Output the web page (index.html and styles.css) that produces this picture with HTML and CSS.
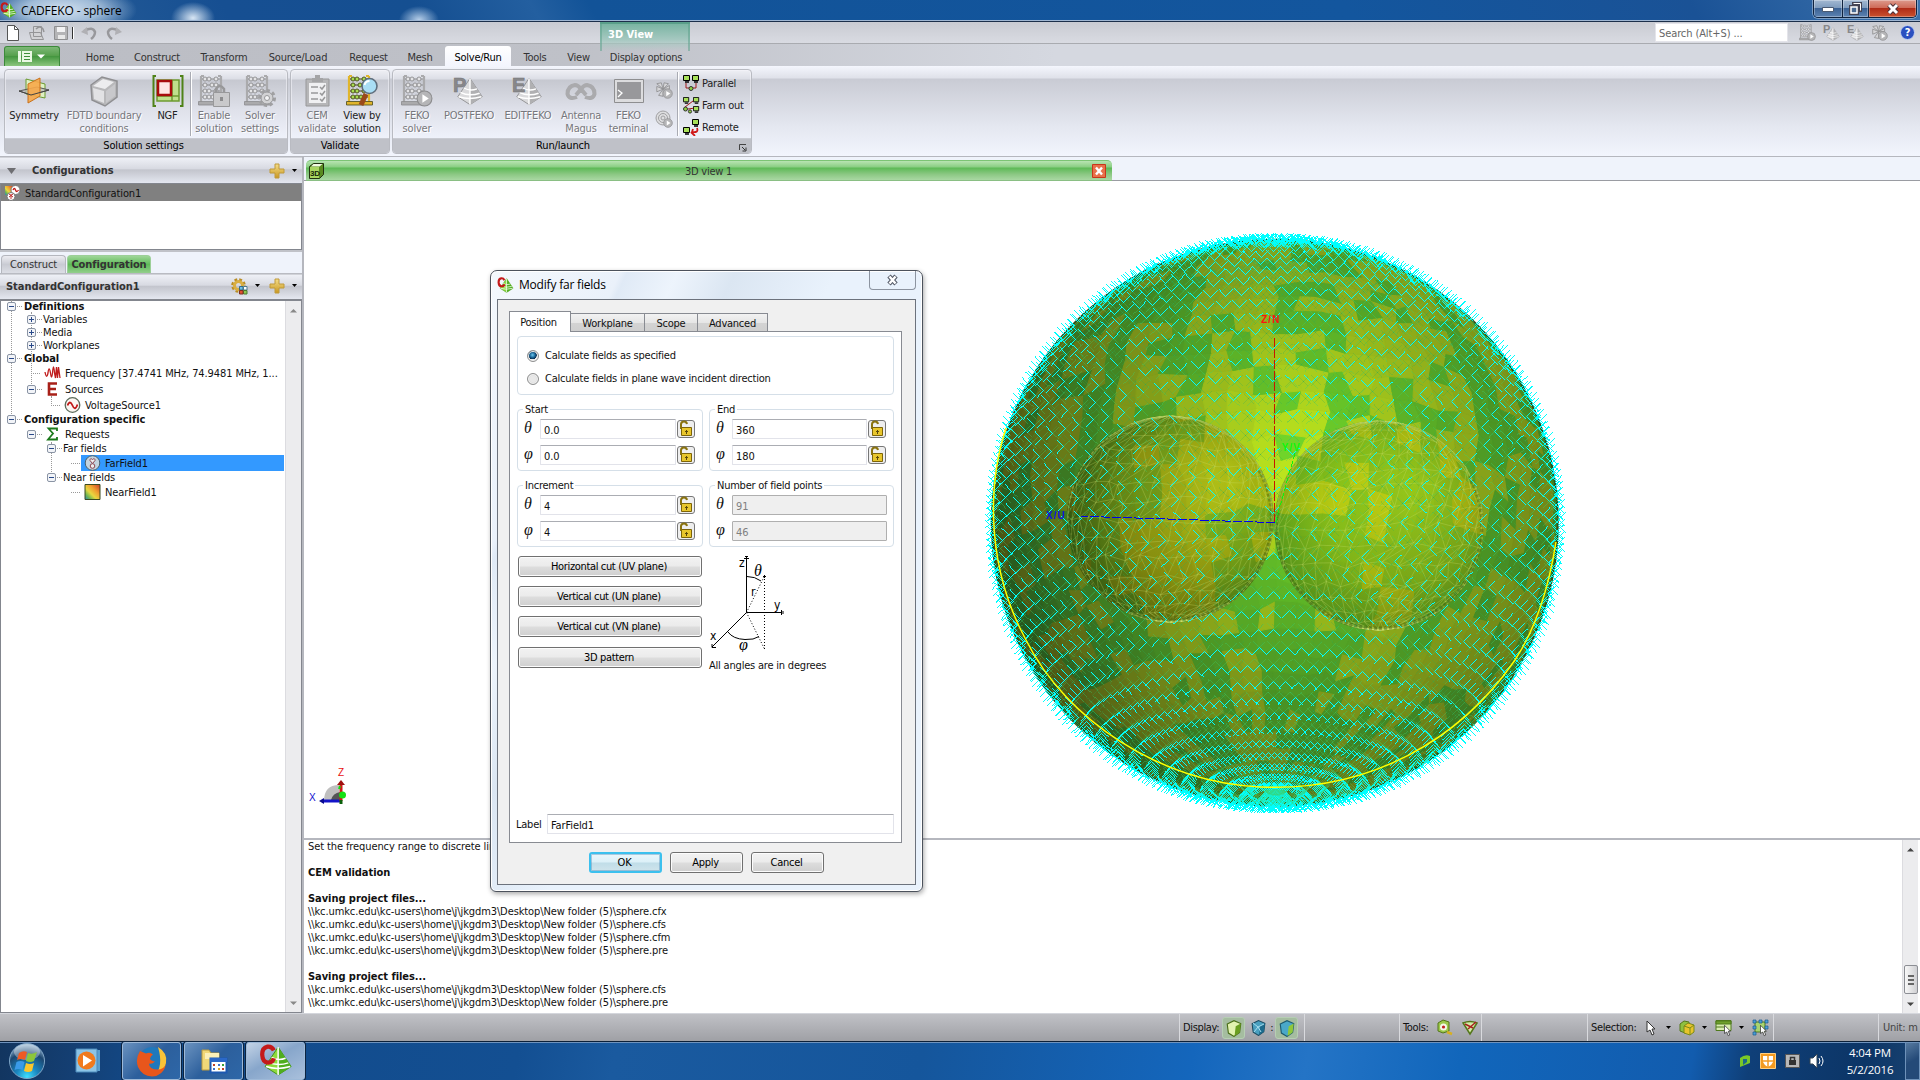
FILE: index.html
```
<!DOCTYPE html>
<html lang="en">
<head>
<meta charset="utf-8">
<title>CADFEKO - sphere</title>
<link rel="stylesheet" href="styles.css">
</head>
<body>
<svg class="defs" width="0" height="0">
  <defs>
    <linearGradient id="gold" x1="0" y1="0" x2="0" y2="1"><stop offset="0" stop-color="#f4de8a"/><stop offset="1" stop-color="#c9971f"/></linearGradient>
    <linearGradient id="heat" x1="1" y1="0" x2="0" y2="1"><stop offset="0" stop-color="#c93a2a"/><stop offset=".35" stop-color="#f0a030"/><stop offset=".6" stop-color="#e8d840"/><stop offset=".8" stop-color="#70b850"/><stop offset="1" stop-color="#2a80c0"/></linearGradient>
    <symbol id="abacus" viewBox="0 0 32 32">
      <path d="M3 1v27M23 1v27M3 1h3M20 1h3" fill="none" stroke="var(--f)" stroke-width="2.2"/>
      <path d="M4 4h18M4 10h18M4 16h18M4 22h18" stroke="var(--s)" stroke-width="1"/>
      <g fill="var(--b)" stroke="var(--s)" stroke-width=".9"><circle cx="7" cy="4" r="2"/><circle cx="11" cy="4" r="2"/><circle cx="18" cy="4" r="2"/><circle cx="7" cy="10" r="2"/><circle cx="14" cy="10" r="2"/><circle cx="18" cy="10" r="2"/><circle cx="7" cy="16" r="2"/><circle cx="11" cy="16" r="2"/><circle cx="18" cy="16" r="2"/><circle cx="7" cy="22" r="2"/><circle cx="11" cy="22" r="2"/><circle cx="15" cy="22" r="2"/></g>
      <path d="M.5 26.500h26v3.500h-26z" fill="var(--f)" stroke="var(--s)" stroke-width=".8"/>
    </symbol>
    <symbol id="play" viewBox="0 0 16 16"><circle cx="8" cy="8" r="7" fill="#b5b5b7" stroke="#8c8c8e"/><path d="M6 4l6 4-6 4z" fill="#fff"/></symbol>
    <symbol id="gem" viewBox="0 0 32 32">
      <path d="M16 1L30 22 16 31 2 22z" fill="var(--g1)" stroke="var(--g3)"/>
      <path d="M16 1L30 22 16 31z" fill="var(--g2)"/>
      <path d="M9 12q7 4 15 1M5 17q10 5 22 1M3 22q12 4 26 0M16 1v30" fill="none" stroke="#fff" stroke-width="1.600"/>
    </symbol>
    <symbol id="logo" viewBox="0 0 32 32">
      <g style="--g1:#8edb3c;--g2:#4fae1e;--g3:#3f8f18"><use href="#gem" x="4" y="0" width="28" height="32"/></g>
      <path d="M14 6Q12 2 8 2.500 3 3.500 3 10q.500 7.500 5.500 7.500 4.500 0 5.500-4" fill="none" stroke="#c41a1a" stroke-width="4"/>
    </symbol>
    <symbol id="plus" viewBox="0 0 16 16"><path d="M6 1h4v5h5v4h-5v5H6v-5H1V6h5z" fill="url(#gold)" stroke="#c09a3a"/></symbol>
    <symbol id="lock" viewBox="0 0 18 18"><path d="M4 9V4q.500-2.500 3-2.500T10 4" fill="none" stroke="#8a7310" stroke-width="2"/><path d="M4.500 7.500h10v8h-10z" fill="#e8c62c" stroke="#7d6408"/><path d="M9 10h1v1h1v1h-1v2H9v-2H8v-1h1z" fill="#5a4808"/></symbol>
    <symbol id="pc" viewBox="0 0 8 8"><path d="M.5.500h6v5h-6z" fill="#a8e05a" stroke="#000"/><path d="M2 7h4" stroke="#000" stroke-width="1.400"/></symbol>
    <symbol id="cube" viewBox="0 0 16 16"><path d="M2 4.500L8 1.500l6 2.500-1 8-5 3.500-5-3z" fill="var(--c1)" stroke="var(--c3)"/><path d="M9.500 6.500L14 4l-1 8-4.500 3z" fill="var(--c2)"/></symbol>
    <symbol id="fan" viewBox="0 0 20 20"><g fill="#d6d6d8" stroke="#929294"><path d="M9 9L2 3l5-1zM9 9L2 12V6zM9 9l1-7 5 1zM9 9l-5 7 5 1zM9 9l7-4v4z"/></g><use href="#play" x="8" y="8" width="12" height="12"/></symbol>
    <symbol id="cursor" viewBox="0 0 12 16"><path d="M2 1v11l3-2 2 5 2-1-2-5h3z" fill="#fff" stroke="#333"/></symbol>
  </defs>
</svg>

<div class="screen">
  <header class="titlebar">
    <svg class="applogo" width="17" height="17"><use href="#logo" width="17" height="17"/></svg>
    <span class="apptitle">CADFEKO - sphere</span>
    <div class="winbtns">
      <span class="wb min"><svg width="14" height="8"><path d="M1.500 2.500h11v4h-11z" fill="#fff" stroke="#4a5a72"/></svg></span>
      <span class="wb res"><svg width="13" height="13"><path d="M4.500 1.500h7v7h-7z" fill="none" stroke="#445" stroke-width="3"/><path d="M4.500 1.500h7v7" fill="none" stroke="#fff"/><path d="M1.500 4.500h7v7h-7z" fill="#7a90ac" stroke="#445" stroke-width="3"/><path d="M2 5h6v6H2z" fill="#4a6a92" stroke="#fff" stroke-width="1.500"/></svg></span>
      <span class="wb cls"><svg width="14" height="12"><path d="M3 2l8 8M11 2l-8 8" stroke="#4a3038" stroke-width="5"/><path d="M3 2l8 8M11 2l-8 8" stroke="#fff" stroke-width="3"/></svg></span>
    </div>
  </header>

  <div class="quick">
    <div class="qicons">
      <svg width="16" height="18"><path d="M2.500 1.500h7l4 4v11h-11z" fill="#fff" stroke="#555"/><path d="M9.500 1.500v4h4" fill="none" stroke="#555"/></svg>
      <svg width="18" height="18"><path d="M5.500 2.500h8v10h-8zM1.500 8.500h11l3 7h-12z" fill="#d2d2d4" stroke="#949496"/><path d="M8 5q4-4 7 0l1 3" fill="none" stroke="#949496" stroke-width="1.500"/></svg>
      <svg width="16" height="16"><path d="M1.500 1.500h13v13h-13z" fill="#b4b4b6" stroke="#8e8e90"/><path d="M4 2h8v5H4z" fill="#f2f2f3"/><path d="M5 10h7v4H5z" fill="#e8e8e8"/></svg>
      <i class="qsep"></i>
      <svg class="undo" width="16" height="16"><path d="M3 6q9-5 11 1 0 4-4 7" fill="none" stroke="#98989c" stroke-width="2.500"/><path d="M0 7l6-5 1 8z" fill="#b0b0b4"/></svg>
      <svg width="16" height="16"><path d="M13 6Q4 1 2 7q0 4 4 7" fill="none" stroke="#98989c" stroke-width="2.500"/><path d="M16 7l-6-5-1 8z" fill="#b0b0b4"/></svg>
    </div>
    <div class="context">3D View</div>
    <div class="search">Search (Alt+S) ...</div>
    <div class="qright">
      <svg class="mono" width="17" height="17"><use href="#abacus" width="17" height="17"/><use href="#play" x="8" y="8" width="9" height="9"/></svg>
      <svg class="mono" width="17" height="17"><use href="#gem" x="3" y="3" width="14" height="14"/><text x="0" y="9" class="ltr">P</text></svg>
      <svg class="mono" width="17" height="17"><use href="#gem" x="3" y="3" width="14" height="14"/><text x="0" y="9" class="ltr">E</text></svg>
      <svg width="17" height="17"><use href="#fan" width="17" height="17"/></svg>
      <span class="help">?</span>
    </div>
  </div>

  <nav class="tabs">
    <div class="filebtn"><svg width="30" height="12"><path d="M0 0h3v11H0zM4 0h10v11H4z" fill="#eaf8e4"/><path d="M6 2.500h6M6 5.500h6M6 8.500h6" stroke="#3f8f3a"/><path d="M19 3.500h8l-4 4z" fill="#fff"/></svg></div>
    <span style="width:40px">Home</span><span style="width:74px">Construct</span><span style="width:60px">Transform</span><span style="width:88px">Source/Load</span><span style="width:53px">Request</span><span style="width:50px">Mesh</span><span class="active">Solve/Run</span><span style="width:48px">Tools</span><span style="width:39px">View</span><span style="width:96px">Display options</span>
  </nav>

  <div class="ribbon">
    <section class="group" style="width:284px">
      <div class="btns">
        <div class="rb" style="width:52px"><svg width="32" height="32"><path d="M8 4l19 5v14L8 19z" fill="#dff0c4" stroke="#6a9a30"/><path d="M1 16l18-4 12 3-18 5z" fill="#b8b8b8" fill-opacity=".7" stroke="#555"/><path d="M10 9l12-6v18L10 28z" fill="#f7a849" fill-opacity=".9" stroke="#c8701a"/><path d="M1 16l12 4 18-5" fill="none" stroke="#444"/></svg><b>Symmetry</b></div>
        <div class="rb off" style="width:88px"><svg width="32" height="32"><path d="M3 10L14 2l15 4v16L17 31 4 25z" fill="#b8b8ba" stroke="#8f8f92" stroke-width="1.500"/><path d="M5 11L15 4l11 3-9 7z" fill="#ececee"/><path d="M5 13l11 3v12L6 24z" fill="#e2e2e4"/><path d="M18 16l9-7v12l-9 7z" fill="#c8c8cb"/></svg><b>FDTD boundary<br>conditions</b></div>
        <div class="rb" style="width:39px"><svg width="32" height="32"><path d="M4 1H1.500v30H4M28 1h2.500v30H28" fill="none" stroke="#4f8218" stroke-width="2"/><path d="M5 5h22v21H5z" fill="#bfe08c" stroke="#6d9a30" stroke-width="1.500"/><path d="M20 5v21M5 21h22" stroke="#6d9a30" stroke-width="1.500"/><path d="M6 6h13v14H6z" fill="#ffe6e4" stroke="#a80c0c" stroke-width="2.500"/></svg><b>NGF</b></div>
        <i class="rsep"></i>
        <div class="rb off" style="width:44px"><svg class="mono" width="32" height="32"><use href="#abacus" width="32" height="32"/><path d="M18 17v-3q4-6 8 0v3" fill="none" stroke="#98989a" stroke-width="2.500"/><path d="M15.500 17.500h16v14h-16z" fill="#c9c9cb" stroke="#98989a"/><path d="M22 22h3v4h-3z" fill="#8c8c8e"/></svg><b>Enable<br>solution</b></div>
        <div class="rb off" style="width:48px"><svg class="mono" width="32" height="32"><use href="#abacus" width="32" height="32"/><circle cx="23" cy="23" r="7.500" fill="none" stroke="#a0a0a2" stroke-width="3" stroke-dasharray="3.200 2.600"/><circle cx="23" cy="23" r="6" fill="#d2d2d4" stroke="#98989a"/><circle cx="23" cy="23" r="2.500" fill="#f4f4f5" stroke="#98989a"/></svg><b>Solver<br>settings</b></div>
      </div>
      <footer class="f1">Solution settings</footer>
    </section>
    <section class="group" style="width:100px;margin-left:2px">
      <div class="btns">
        <div class="rb off" style="width:46px"><svg width="32" height="32"><path d="M5 4h23v27H5z" fill="#b6b6b8" stroke="#98989a"/><path d="M8 8h17v20H8z" fill="#f0f0f2"/><path d="M11 3h11v4H11zM14 0h5v3h-5z" fill="#a4a4a6"/><path d="M10 12h7M10 18h7M10 24h7M19 12l2 2 3-4M19 18l2 2 3-4M19 24l2 2 3-4" fill="none" stroke="#98989a" stroke-width="1.500"/></svg><b>CEM<br>validate</b></div>
        <div class="rb" style="width:44px"><svg class="col" width="32" height="32"><use href="#abacus" width="32" height="32"/><path d="M20 19l-5 11" stroke="#9a4a1a" stroke-width="5"/><circle cx="23.500" cy="11" r="7.500" fill="#a9def5" stroke="#5f6e7c" stroke-width="1.600"/><path d="M18.500 10q1-4 5-4" fill="none" stroke="#fff" stroke-width="2"/></svg><b>View by<br>solution</b></div>
      </div>
      <footer>Validate</footer>
    </section>
    <section class="group" style="width:360px;margin-left:2px">
      <div class="btns">
        <div class="rb off" style="width:42px"><svg class="mono" width="32" height="32"><use href="#abacus" width="32" height="32"/><use href="#play" x="15" y="15" width="17" height="17"/></svg><b>FEKO<br>solver</b></div>
        <div class="rb off" style="width:62px"><svg class="mono" width="32" height="32"><use href="#gem" x="3" y="1" width="28" height="31"/><text x="0" y="17" class="ltr big">P</text></svg><b>POSTFEKO</b></div>
        <div class="rb off" style="width:56px"><svg class="mono" width="32" height="32"><use href="#gem" x="3" y="1" width="28" height="31"/><text x="0" y="17" class="ltr big">E</text></svg><b>EDITFEKO</b></div>
        <div class="rb off" style="width:50px"><svg width="32" height="32"><path d="M12 22q-8 3-9.500-3 0-8 7.500-9 3 0 6 4l5 6M20 22q8 3 9.500-3 0-8-7.500-9-3 0-6 4l-5 6" fill="none" stroke="#aaaaad" stroke-width="4"/></svg><b>Antenna<br>Magus</b></div>
        <div class="rb off" style="width:45px"><svg width="32" height="32"><path d="M1.500 4.500h29v23h-29z" fill="#dcdcde" stroke="#8e8e90"/><path d="M4 7h24v17H4z" fill="#98989b"/><path d="M5 15l4 3-4 4" fill="none" stroke="#fff" stroke-width="1.300"/></svg><b>FEKO<br>terminal</b></div>
        <div class="smalls"><svg width="18" height="18"><use href="#fan" width="18" height="18"/></svg><svg width="18" height="18"><circle cx="8" cy="8" r="7" fill="#dedee0" stroke="#a0a0a2"/><circle cx="8" cy="8" r="4.500" fill="none" stroke="#a0a0a2"/><circle cx="8" cy="8" r="2" fill="none" stroke="#a0a0a2"/><use href="#play" x="8" y="8" width="10" height="10"/></svg></div>
        <i class="rsep"></i>
        <div class="rlist">
          <div><svg width="17" height="17"><path d="M3 8v5h10V8" fill="none" stroke="#a01818"/><use href="#pc" x="0" y="0" width="8" height="8"/><use href="#pc" x="9" y="0" width="8" height="8"/><circle cx="8" cy="13.500" r="2" fill="#8fd040" stroke="#333"/></svg>Parallel</div>
          <div><svg width="17" height="17"><path d="M2 10l8-6M5 12l7-1" stroke="#a01818"/><use href="#pc" x="0" y="0" width="7" height="7"/><use href="#pc" x="10" y="0" width="7" height="7"/><use href="#pc" x="10" y="9" width="7" height="7"/><circle cx="2.500" cy="12" r="2" fill="#8fd040" stroke="#333"/><circle cx="7" cy="14.500" r="1.600" fill="#8fd040" stroke="#333"/></svg>Farm out</div>
          <div><svg width="17" height="17"><path d="M14 9q2 5-5 4l1-3M8 13l4 4" fill="none" stroke="#d01818" stroke-width="1.800"/><use href="#pc" x="9" y="0" width="8" height="8"/><use href="#pc" x="0" y="8" width="8" height="8"/></svg>Remote</div>
        </div>
      </div>
      <footer class="f3">Run/launch<svg class="launch" width="8" height="8"><path d="M.5 6V.500H7" fill="none" stroke="#444"/><path d="M3 3l3 3M7 3.500V7H3.500" fill="none" stroke="#333"/></svg></footer>
    </section>
  </div>

  <main class="work">
    <aside class="side">
      <div class="phead conf"><svg width="10" height="8"><path d="M0 1h9l-4.500 6z" fill="#6e6e72"/></svg><b>Configurations</b><svg class="pl" width="16" height="16"><use href="#plus" width="16" height="16"/></svg><svg width="6" height="4"><path d="M0 0h5L2.500 3z"/></svg></div>
      <div class="clist"><div class="crow"><svg width="17" height="16"><path d="M1 1h8v9H1z" fill="url(#heat)"/><circle cx="11.500" cy="5" r="4.500" fill="#fff" stroke="#777"/><path d="M9 5q1.500-3 2.500 0t3 0" fill="none" stroke="#c01818" stroke-width="1.300"/><circle cx="7" cy="11.500" r="4" fill="#fff" stroke="#777"/><path d="M7 9v5M5 9l4 3M9 9l-4 3" stroke="#c03030"/></svg>StandardConfiguration1</div></div>
      <div class="ptabs"><span class="pt">Construct</span><span class="pt on">Configuration</span></div>
      <div class="phead std"><b>StandardConfiguration1</b><svg class="gear" width="17" height="17"><circle cx="7.500" cy="7.500" r="5.800" fill="none" stroke="#b98d25" stroke-width="3" stroke-dasharray="2.600 1.960"/><circle cx="7.500" cy="7.500" r="4" fill="none" stroke="#d9ae42" stroke-width="3"/><path d="M8.500 8.500h3.500v3.500H8.500z" fill="#6cc0e8" stroke="#3a6a80"/><path d="M12.500 8.500H16v3.500h-3.500z" fill="#fff" stroke="#4a7a90"/><path d="M12.500 12.500H16V16h-3.500z" fill="#90c850" stroke="#4a7a30"/><path d="M8.500 12.500h3.500V16H8.500z" fill="#e05030" stroke="#803020"/></svg><svg class="ar" width="6" height="4"><path d="M0 0h5L2.500 3z"/></svg><svg class="pl" width="16" height="16"><use href="#plus" width="16" height="16"/></svg><svg width="6" height="4"><path d="M0 0h5L2.500 3z"/></svg></div>
      <div class="tree">
        <div class="rows">
          <div class="r bold" style="--d:0"><i class="bx m"></i>Definitions</div>
          <div class="r" style="--d:1"><i class="bx p"></i>Variables</div>
          <div class="r" style="--d:1"><i class="bx p"></i>Media</div>
          <div class="r" style="--d:1"><i class="bx p"></i>Workplanes</div>
          <div class="r bold" style="--d:0"><i class="bx m"></i>Global</div>
          <div class="r t" style="--d:1"><i class="ln"></i><svg width="17" height="16"><path d="M1 7q1.500 8 3 1 1-8 2.500 0 1 8 2 0 1-12 2 0l1 5 1-11 1 11 1-11 1.500 11" fill="none" stroke="#c01c1c" stroke-width="1.300"/></svg>Frequency [37.4741 MHz, 74.9481 MHz, 1...</div>
          <div class="r t" style="--d:1"><i class="bx m"></i><svg width="17" height="16"><path d="M13 2.500H5v11h8M5 8h7" fill="none" stroke="#a82018" stroke-width="2.600"/></svg>Sources</div>
          <div class="r t" style="--d:2"><i class="ln"></i><svg width="17" height="16"><circle cx="8.500" cy="8" r="7.300" fill="#fbf6f2" stroke="#5b6b5b" stroke-width="1.300"/><path d="M3.500 8.500q2.500-6 5 0t5-1" fill="none" stroke="#c01818" stroke-width="1.800"/></svg>VoltageSource1</div>
          <div class="r bold" style="--d:0"><i class="bx m"></i>Configuration specific</div>
          <div class="r t" style="--d:1"><i class="bx m"></i><svg width="17" height="16"><path d="M13 5V2.500H4.500L9 7.500l-5 6h9V11" fill="none" stroke="#1c7a1c" stroke-width="1.800"/></svg>Requests</div>
          <div class="r" style="--d:2"><i class="bx m"></i>Far fields</div>
          <div class="r t sel" style="--d:3"><i class="ln"></i><svg width="17" height="16"><circle cx="8.500" cy="8" r="7.300" fill="#c3d3de" stroke="#49606c"/><circle cx="8.500" cy="11" r="2.300" fill="#eee" stroke="#8a4450"/><path d="M8.500 8.500l-2.500-3q0-3 2.500-1 2.500-2 2.500 1z" fill="#eee" stroke="#8a4450"/></svg>FarField1</div>
          <div class="r" style="--d:2"><i class="bx m"></i>Near fields</div>
          <div class="r t" style="--d:3"><i class="ln"></i><svg width="17" height="16"><path d="M1 .500h15v15H1z" fill="url(#heat)" stroke="#3a4a20"/></svg>NearField1</div>
          <i class="v v0"></i><i class="v v1"></i><i class="v v2"></i><i class="v v3"></i>
        </div>
        <div class="sbar dim"><svg width="8" height="5"><path d="M0 4.500h7L3.500 1z"/></svg><svg width="8" height="5"><path d="M0 .500h7L3.500 4z"/></svg></div>
      </div>
    </aside>
    <div class="center">
      <div class="docrow"><div class="doctab"><svg width="17" height="18"><path d="M1.500 4.500l4-3h10v11l-4 4h-10z" fill="#5a8a20" stroke="#223010"/><path d="M2 5h9v11H2z" fill="#a8d660"/><path d="M5.500 2h9l-3 2.500H3z" fill="#f0fae0"/><text x="2" y="13.500" class="t3d">3D</text></svg><span>3D view 1</span><svg width="14" height="14"><path d="M.5.500h13v13H.5z" fill="#e8714a" stroke="#c8361c"/><path d="M4 3.500l6 7M10 3.500l-6 7" stroke="#fff" stroke-width="2.400"/></svg></div></div>
      <div class="view">
        <canvas id="sphere" width="620" height="610"></canvas>
        <svg class="axes" width="620" height="610">
          <text x="291" y="103" fill="#ff1010">Z/N</text><text x="76" y="299" fill="#1010e0">X/U</text><text x="312" y="231" fill="#10f810">Y/V</text>
        </svg>
        <svg class="triad" width="46" height="42"><text x="29" y="9" fill="#e81010">Z</text><text x="0" y="34" fill="#1010d0">X</text><path d="M15 34q0-16 15-16v16z" fill="#bfbfbf"/><path d="M22 33q2-7 9-8v8z" fill="#555"/><path d="M13 34h19" stroke="#1414c8" stroke-width="3"/><path d="M10 34l5-3v6z" fill="#0a0a90"/><path d="M32 34V17" stroke="#d01818" stroke-width="3"/><path d="M28 18l4-5 4 5z" fill="#a01010"/><path d="M31 19l-1 3" stroke="#10e010" stroke-width="2"/><circle cx="33.500" cy="28" r="3.500" fill="#14e014"/><path d="M32 33v4" stroke="#0a600a" stroke-width="3"/></svg>
      </div>
      <div class="msgs">
        <div class="log">
          <p>Set the frequency range to discrete linear</p><p>&nbsp;</p>
          <p class="bold">CEM validation</p><p>&nbsp;</p>
          <p class="bold">Saving project files...</p>
          <p>\\kc.umkc.edu\kc-users\home\j\jkgdm3\Desktop\New folder (5)\sphere.cfx</p>
          <p>\\kc.umkc.edu\kc-users\home\j\jkgdm3\Desktop\New folder (5)\sphere.cfs</p>
          <p>\\kc.umkc.edu\kc-users\home\j\jkgdm3\Desktop\New folder (5)\sphere.cfm</p>
          <p>\\kc.umkc.edu\kc-users\home\j\jkgdm3\Desktop\New folder (5)\sphere.pre</p><p>&nbsp;</p>
          <p class="bold">Saving project files...</p>
          <p>\\kc.umkc.edu\kc-users\home\j\jkgdm3\Desktop\New folder (5)\sphere.cfs</p>
          <p>\\kc.umkc.edu\kc-users\home\j\jkgdm3\Desktop\New folder (5)\sphere.pre</p>
        </div>
        <div class="sbar"><svg width="8" height="5"><path d="M0 4.500h7L3.500 1z"/></svg><div class="thumb"><i></i><i></i><i></i></div><svg width="8" height="5"><path d="M0 .500h7L3.500 4z"/></svg></div>
      </div>
    </div>
  </main>

  <div class="status">
    <div class="s" style="width:1180px"></div>
    <div class="s" style="width:125px"><span>Display:</span><i class="tog"><svg class="cg" width="18" height="18"><use href="#cube" width="18" height="18"/></svg></i><svg class="cb" width="17" height="17"><use href="#cube" width="17" height="17"/><path d="M3 4l5 4 6-3M8 8l-4 5M8 8l3 5" fill="none" stroke="#a8dff0"/></svg><span class="colon">:</span><i class="tog"><svg class="cm" width="18" height="18"><use href="#cube" width="18" height="18"/></svg></i></div>
    <div class="s" style="width:95px"></div>
    <div class="s" style="width:82px"><span>Tools:</span><svg class="t1" width="17" height="17"><path d="M2 4l5-3 6 2v9l-6 2-5-2z" fill="#9cc84a" stroke="#54761a"/><circle cx="7.500" cy="8" r="3.500" fill="#f4f8e8"/><circle cx="7.500" cy="8" r="1.600" fill="#c02020"/><path d="M11 13l5 2" stroke="#d8b020" stroke-width="2.500"/></svg><svg class="t2" width="17" height="17"><path d="M1 4q7-3 14 0l-7 11z" fill="#d4eca8" stroke="#54761a" stroke-width="1.500"/><path d="M3 5l8 4M6 10L14 3" stroke="#a82020" stroke-width="1.500"/></svg></div>
    <div class="s" style="width:106px"></div>
    <div class="s" style="width:186px"><span>Selection:</span><svg class="u1" width="12" height="16"><use href="#cursor" width="12" height="16"/></svg><svg class="a" width="6" height="4"><path d="M0 0h5L2.500 3z"/></svg><svg class="u2" width="17" height="17"><path d="M1 5l4-3 5 1v8l-4 3-5-2z" fill="#8fc040" stroke="#54761a"/><path d="M5 7l4-3 6 2v7l-4 3-6-2z" fill="#e8c42c" stroke="#7a8a18"/><path d="M5 7l6 2v7M11 9l4-3" fill="none" stroke="#7a8a18"/></svg><svg class="a" width="6" height="4"><path d="M0 0h5L2.500 3z"/></svg><svg class="u2" width="18" height="18"><path d="M1 1.500h15v10H1z" fill="#d8ecb0" stroke="#4f7a1c"/><path d="M1 2h15v3H1zM1 8h10" fill="#6fa02c" stroke="#4f7a1c"/><use href="#cursor" x="8" y="5" width="9" height="13"/></svg><svg class="a" width="6" height="4"><path d="M0 0h5L2.500 3z"/></svg><svg class="u2" width="18" height="18"><path d="M3 3h10v10H3z" fill="#a8d470" stroke="#4f7a1c"/><path d="M1 1h3v3H1zM7 1h3v3H7zM13 1h3v3h-3zM1 7h3v3H1zM1 13h3v3H1zM13 7h3v3h-3z" fill="#4aa0d8" stroke="#1a5a90" stroke-width=".7"/><use href="#cursor" x="7" y="5" width="9" height="13"/></svg></div>
    <div class="s" style="width:105px"></div>
    <div class="s unit">Unit: m</div>
  </div>

  <footer class="taskbar">
    <svg class="orb" width="38" height="38"><defs><radialGradient id="orbg" cx=".5" cy=".95" r=".9"><stop offset="0" stop-color="#3ee0ff"/><stop offset=".35" stop-color="#1a86c0"/><stop offset=".75" stop-color="#1c4670"/><stop offset="1" stop-color="#8fb0cc"/></radialGradient></defs><circle cx="19" cy="19" r="17.500" fill="url(#orbg)" stroke="#7fa6c8"/><ellipse cx="19" cy="10" rx="13" ry="8" fill="#fff" opacity=".35"/><path d="M11 11q4-3 8-1l-2 8q-4-2-8 0z" fill="#ee5a24"/><path d="M20 11q4 2 9-1l-3 9q-4 2-8 0z" fill="#8cc63a"/><path d="M8.500 20q4-2 8 0l-2 8q-4-2-8 0z" fill="#3a9ae8"/><path d="M18 21q4 2 8 0l-2 8q-4 2-8 0z" fill="#fbc62c"/></svg>
    <svg class="wmp" width="28" height="28"><path d="M4 3h22v21H4z" fill="#5a9fd0"/><path d="M2 2h21v23H2z" fill="#8cc4e6" stroke="#4a8abc"/><circle cx="12.500" cy="13.500" r="9" fill="#f07a1e"/><path d="M9 8l9 5.500-9 6z" fill="#fff"/></svg>
    <div class="tb"><svg width="32" height="32"><circle cx="16" cy="15" r="13" fill="#1f78bc"/><path d="M22 2q10 6 8 16-2 10-12 13 10-9 4-29z" fill="#f9c338"/><path d="M4 6q-5 8-2 16 4 9 14 9.500 11-.5 14-12-3 5-8 5-9 0-9-6 3 1 6-2-5-1-5-3 1-3 3-4-3-3-7-1z" fill="#e8561c"/></svg></div>
    <div class="tb"><svg width="32" height="32"><path d="M4 5h7l2 3h8v17H4z" fill="#f0d878" stroke="#b89a40"/><path d="M7 8h14v6H7z" fill="#fbf0b8"/><path d="M12.500 13.500h16v14h-16z" fill="#fff" stroke="#1c58b0" stroke-width="2"/><path d="M12 13h17v4H12z" fill="#2a68c8"/><path d="M15 19h2v2h-2zM24 23h2v2h-2z" fill="#c04028"/><path d="M20 19h2v2h-2zM15 23h2v2h-2z" fill="#3a70d0"/><path d="M24 19h2v2h-2z" fill="#38a038"/><path d="M20 23h2v2h-2z" fill="#e0a020"/></svg></div>
    <div class="tb cur"><svg width="34" height="34"><use href="#logo" width="34" height="34"/></svg></div>
    <div class="tray">
      <svg width="12" height="14"><path d="M1 4q5-4 10-2v7l-5 2-5 2z" fill="#7ac828"/><path d="M4 5h4v3l-4 3z" fill="#1a6a8a"/></svg>
      <svg width="16" height="16"><path d="M.5.500h15v15H.5z" fill="#f39a20" stroke="#ffcf80"/><path d="M3 3h10v6q-1 3-5 5-4-2-5-5z" fill="#fff"/><path d="M8 2v12M3 8h10" stroke="#f39a20" stroke-width="1.500"/></svg>
      <svg width="15" height="16"><path d="M.5 1.500h14v13H.5z" fill="#b8b8b8" stroke="#555"/><path d="M4 7h7v5H4z" fill="#333"/><path d="M5.500 7V4.500h4V7" fill="none" stroke="#333" stroke-width="1.500"/></svg>
      <svg width="15" height="16"><path d="M1 5h3l4-4v14l-4-4H1z" fill="#fff" stroke="#345"/><path d="M10 5q2 3 0 6M12 3q4 5 0 10" fill="none" stroke="#fff"/></svg>
      <div class="clock">4:04 PM<br>5/2/2016</div>
      <i class="desk"></i>
    </div>
  </footer>

  <div class="dialog">
    <div class="dtitle"><svg width="17" height="17"><use href="#logo" width="17" height="17"/></svg><span>Modify far fields</span><i class="dx"><svg width="13" height="12"><path d="M3 2l7 8M10 2l-7 8" stroke="#555b68" stroke-width="4.500"/><path d="M3.500 2.500l6 7M9.500 2.500l-6 7" stroke="#fff" stroke-width="2.400"/></svg></i></div>
    <div class="dbody">
      <div class="dtabs"><span class="on" style="width:62px">Position</span><span style="width:74px">Workplane</span><span style="width:53px">Scope</span><span style="width:70px">Advanced</span></div>
      <div class="pane">
        <div class="radios"><label><i class="rad on"></i>Calculate fields as specified</label><label><i class="rad"></i>Calculate fields in plane wave incident direction</label></div>
        <div class="fgrid">
          <div class="fs"><em>Start</em>
            <div class="fr"><u>θ</u><span class="in">0.0</span><i class="lk"><svg width="18" height="18"><use href="#lock" width="18" height="18"/></svg></i></div>
            <div class="fr"><u>φ</u><span class="in">0.0</span><i class="lk"><svg width="18" height="18"><use href="#lock" width="18" height="18"/></svg></i></div></div>
          <div class="fs"><em>End</em>
            <div class="fr"><u>θ</u><span class="in">360</span><i class="lk"><svg width="18" height="18"><use href="#lock" width="18" height="18"/></svg></i></div>
            <div class="fr"><u>φ</u><span class="in">180</span><i class="lk"><svg width="18" height="18"><use href="#lock" width="18" height="18"/></svg></i></div></div>
          <div class="fs"><em>Increment</em>
            <div class="fr"><u>θ</u><span class="in">4</span><i class="lk"><svg width="18" height="18"><use href="#lock" width="18" height="18"/></svg></i></div>
            <div class="fr"><u>φ</u><span class="in">4</span><i class="lk"><svg width="18" height="18"><use href="#lock" width="18" height="18"/></svg></i></div></div>
          <div class="fs"><em>Number of field points</em>
            <div class="fr"><u>θ</u><span class="in ro">91</span></div>
            <div class="fr"><u>φ</u><span class="in ro">46</span></div></div>
        </div>
        <div class="lower">
          <div class="cuts"><span class="pb">Horizontal cut (UV plane)</span><span class="pb">Vertical cut (UN plane)</span><span class="pb">Vertical cut (VN plane)</span><span class="pb">3D pattern</span></div>
          <div class="diag">
            <svg width="80" height="100" fill="none" stroke="#000"><path d="M37.500 60.500V5M37.500 60.500H73M37.500 60.500L3 95"/><path d="M35 6.500h5M36 4.500h3M72.500 58v5M74 59v3M3 92v3.500h4" /><path d="M37.500 60.500L55.500 24M55.500 24v73M37.500 60.500L55.500 97" stroke-dasharray="1 2"/><path d="M38 24.500q8 0 14 4.500M19 80q5 7 17 7.500 9 .500 14-3"/><path d="M54 24.500h3M55.500 23v3"/><g fill="#000" stroke="none"><text x="30" y="15">z</text><text x="42" y="44">r</text><text x="65" y="57">y</text><text x="1" y="88">x</text><text class="gk" x="45" y="24">θ</text><text class="gk" x="30" y="98">φ</text></g></svg>
            <span>All angles are in degrees</span>
          </div>
        </div>
        <div class="label"><span>Label</span><span class="in">FarField1</span></div>
      </div>
      <div class="acts"><span class="pb def">OK</span><span class="pb">Apply</span><span class="pb">Cancel</span></div>
    </div>
  </div>
</div>
<script src="sphere.js"></script>
</body>
</html>
```
FILE: styles.css
```
*{box-sizing:border-box}
body{margin:0;overflow:hidden;font:11px/13px "DejaVu Sans Condensed","DejaVu Sans",sans-serif;letter-spacing:-.24px;color:#111;white-space:nowrap}
i,em,u{font-style:normal;text-decoration:none}
p{margin:0}
svg{display:block;flex:none}
.defs{position:absolute}
.bold{font-weight:bold;letter-spacing:-.05px}
.screen{position:relative;width:1920px;height:1080px;display:flex;flex-direction:column;background:#eff3fb}
.mono{--f:#aaaaac;--s:#8c8c8e;--b:#e4e4e6;--g1:#dadadc;--g2:#b0b0b2;--g3:#8c8c8e}
.col{--f:#e0b52c;--s:#4a4a1a;--b:#a6dc50}
.ltr{font:bold 11px "Liberation Sans",sans-serif;fill:#88888a}
.ltr.big{font-size:20px;stroke:#77777a;stroke-width:.6}

.titlebar{height:22px;display:flex;align-items:center;border-bottom:1px solid #1c2f4a;box-shadow:inset 0 -1px #9fb6d2;background:radial-gradient(ellipse 75px 26px at 62px 10px,#d4e2f0 0,#b0c8e0e0 50%,#b0c8e000),radial-gradient(ellipse 22px 16px at 193px 18px,#d8e6f4 0,#d8e6f400),radial-gradient(ellipse 20px 14px at 419px 20px,#b8d0ea 0,#b8d0ea00),linear-gradient(60deg,#2a5f98 0,#164f92 12%,#154f91 22%,#235fa0 28%,#125398 31%,#13569e 70%,#1a5296 88%,#3d73ad 100%)}
.applogo{margin:-1px 0 0 0}
.apptitle{font:12px/20px "Open Sans","Noto Sans",sans-serif;letter-spacing:-.1px;margin-left:4px;color:#000}
.winbtns{margin-left:auto;margin-right:3px;align-self:flex-start;height:18px;display:flex;border:1px solid #10233f;border-top:0;border-radius:0 0 5px 5px;overflow:hidden;box-shadow:0 0 0 1px #ffffff60}
.wb{display:flex;align-items:center;justify-content:center;background:linear-gradient(#a3b9d2 0,#7f9cbe 45%,#3b6295 50%,#5d83b2);box-shadow:inset 0 0 0 1px #ffffff50}
.min{width:29px;border-right:1px solid #10233f}.res{width:26px;border-right:1px solid #10233f}.cls{width:47px;background:linear-gradient(#dd9a8c 0,#cf6b58 45%,#b02c17 50%,#c9522f)}

.quick{height:22px;display:flex;background:linear-gradient(#c9cbd2,#d9dbe2);border-bottom:1px solid #a9abb0;position:relative}
.qicons{display:flex;align-items:center;gap:7px;padding-left:5px;width:600px}
.qsep{width:2px;height:12px;background:#333;border-right:1px solid #fff;margin:0 0 0 -4px}
.undo{margin-right:2px}
.context{width:90px;height:29px;padding:6px 0 0 8px;background:linear-gradient(#75b29f,#a5c8c0 60%,#c5cbd400);box-shadow:inset 2px 0 #5a9f8a80,inset -2px 0 #5a9f8a80,inset 0 2px #5a9f8a;color:#fff;font-weight:bold;letter-spacing:0;z-index:1}
.search{margin:1px 0 0 965px;width:133px;height:19px;background:#fff;border:1px solid #e4e4ea;padding:3px 3px 0;color:#666;letter-spacing:-.1px}
.qright{display:flex;align-items:center;gap:7px;margin-left:11px}
.help{width:15px;height:15px;border-radius:50%;background:#2a50c0;border:1px solid #c8d4f0;color:#fff;text-align:center;font-weight:bold;margin-left:5px}

.tabs{height:22px;display:flex;align-items:flex-end;background:linear-gradient(90deg,#bbbdc4 0,#bfc1c8 30%,#d5d8e0 55%);padding-left:4px;color:#333}
.tabs span{text-align:center;padding-bottom:2px}
.tabs span.active{width:66px;height:20px;background:linear-gradient(#fff,#f3f5fd);border-radius:3px 3px 0 0;padding-top:5px;color:#000}
.filebtn{width:56px;height:20px;background:linear-gradient(#7db877 0,#57a04d 45%,#459740 50%,#8cc67e);border:1px solid #3c8a3a;border-bottom:0;border-radius:3px 3px 0 0;padding:4px 0 0 13px;margin-right:20px}
.ribbon{height:91px;display:flex;padding:3px 0 0 4px;background:linear-gradient(#f4f6fd 0,#dfe1e9 12px,#c9cbd4 13px,#e4e7f0 60px,#f2f5fd);border-bottom:1px solid #b5b7be}
.group{height:85px;display:flex;flex-direction:column;border:1px solid #b9bbc2;border-radius:4px;background:linear-gradient(#eff0f5 0,#dcdee6 9px,#c6c8d0 10px,#dfe1ea 40px,#eff2fb 69px);overflow:hidden;box-shadow:inset 0 0 0 1px #f4f5fa90}
.btns{height:68px;display:flex;padding-left:3px;flex:none}
.rb{display:flex;flex-direction:column;align-items:center;padding-top:5px}
.rb b{font-weight:normal;text-align:center;margin-top:2px;color:#222;letter-spacing:-.2px}
.off b{color:#77777c;text-shadow:1px 1px #fff}
.rsep{width:2px;height:64px;margin:2px 0 0 3px;background:#a9abb3;border-right:1px solid #fff}
.group footer{flex:1;background:#bfc1c8;text-align:center;color:#000;line-height:14px;position:relative;border-top:1px solid #c9cbd2;letter-spacing:-.15px}
.group .f1{padding-right:5px}.group .f3{padding-right:18px}
.launch{position:absolute;right:4px;top:5px}
.smalls{width:23px;padding:11px 0 0 4px;display:flex;flex-direction:column;gap:11px}
.rlist{padding:5px 0 0 4px;display:flex;flex-direction:column;gap:5px;letter-spacing:-.24px;color:#222}
.rlist div{display:flex;align-items:center;gap:2px;height:17px}

.work{height:857px;display:flex}
.side{width:304px;display:flex;flex-direction:column;border-right:2px solid #b5b7be}
.phead{display:flex;align-items:center;background:linear-gradient(#eef0f6 0,#d8dae2 42%,#c3c5cd 48%,#e4e7f0);border-top:1px solid #d0d2d8;color:#333}
.phead b{letter-spacing:-.05px;flex:1}
.phead .pl{margin-right:7px}
.phead>svg:last-child{margin-right:4px}
.conf{height:26px;padding-left:7px}.conf b{margin-left:15px}
.std{height:25px;padding:0 0 2px 6px}.gear{margin-right:7px}.phead .ar{margin-right:8px}
.clist{height:67px;width:302px;background:#fff;border:1px solid #83868e}
.crow{height:17px;background:#808080;display:flex;align-items:center;gap:4px;padding:1px 0 0 3px;letter-spacing:-.1px}
.ptabs{height:24px;display:flex;align-items:flex-end;border-top:2px solid #c0c2c8;border-bottom:1px solid #b9bbc2;padding-left:1px;gap:1px}
.pt{height:18px;line-height:18px;width:65px;text-align:center;border:1px solid #b5b7be;border-bottom:0;border-radius:4px 4px 0 0;background:linear-gradient(#ededf2,#c9cbd3 50%,#dcdee5);letter-spacing:-.1px;color:#333}
.pt.on{width:84px;font-weight:bold;letter-spacing:-.1px;background:linear-gradient(#9ed698,#5fba58 50%,#93cf8c);border-color:#9ccf98}
.tree{flex:1;width:302px;background:#fff;border:1px solid #83868e;border-top:2px solid #83868e;display:flex;margin-bottom:1px}
.rows{flex:1;position:relative;margin-top:-1px}
.r{height:13px;display:flex;align-items:center;padding-left:calc(6px + var(--d)*20px);letter-spacing:-.1px}
.r.bold{letter-spacing:-.05px}
.r.t{height:16px;gap:4px;padding-top:1px}
.r.t svg{margin-left:-4px;margin-top:-1px}
.r.t .bx{margin-right:8px}
.r.sel{background:linear-gradient(90deg,#fff 80px,#3399ff 80px);margin-right:1px}
.bx{width:9px;height:9px;border:1px solid #8a94a4;border-radius:2px;background:linear-gradient(#2a4a8a,#2a4a8a) center/5px 1px no-repeat,#f2f4f8;flex:none;margin-right:7px;position:relative;z-index:1}
.bx.p{background:linear-gradient(#2a4a8a,#2a4a8a) center/5px 1px no-repeat,linear-gradient(#2a4a8a,#2a4a8a) center/1px 5px no-repeat,#f2f4f8}
.bold .bx{margin-right:8px}
.bx::after{content:"";position:absolute;left:9px;top:3px;width:5px;border-top:1px dotted #999}
.ln{width:9px;margin:0 4px;border-top:1px dotted #999;flex:none}
.v{position:absolute;width:0;border-left:1px dotted #999}
.v0{left:10px;top:0;height:120px}.v1{left:30px;top:12px;height:82px}.v2{left:50px;top:96px;height:10px}.v3{left:50px;top:142px;height:34px}
.sbar{width:16px;background:#ececee;border-left:1px solid #dcdce0;display:flex;flex-direction:column;align-items:center;justify-content:space-between;padding:7px 0 6px}
.sbar svg{fill:#444}.dim svg{fill:#888}
.thumb{margin-top:auto;margin-bottom:8px;width:14px;height:29px;border:1px solid #8c8e94;border-radius:2px;background:linear-gradient(90deg,#f8f8f8,#cfcfd2);padding:9px 3px 0;display:flex;flex-direction:column;gap:2px}
.thumb i{height:2px;background:#666}
.center{flex:1;display:flex;flex-direction:column}
.docrow{height:24px;padding:3px 0 0 2px;border-bottom:1px solid #9a9ca2}
.doctab{width:806px;height:21px;display:flex;align-items:center;padding:0 6px 0 2px;border-radius:5px 5px 0 0;background:linear-gradient(#b8e4b2 0,#8ccf85 30%,#5fba58 38%,#8cc884 70%,#a9d8a3);border-top:1px solid #7cc474;border-bottom:1px solid #8abf84;color:#333}
.doctab span{flex:1;text-align:center;padding-top:1px}
.t3d{font:bold 8px "Liberation Sans",sans-serif;letter-spacing:-.3px;fill:#16240a}
.view{height:657px;background:#fff;position:relative}
#sphere,.axes{position:absolute;left:666px;top:39px}
.axes{font:bold 10px "Liberation Sans",sans-serif;letter-spacing:1px}
.triad{position:absolute;left:5px;top:586px;font:10px "Liberation Sans",sans-serif}
.msgs{flex:1;background:#fff;border-top:2px solid #b5b7be;display:flex;margin-bottom:1px;padding-right:2px}
.log{flex:1;padding:0 0 0 4px;letter-spacing:-.1px;overflow:hidden}

.status{height:28px;border-top:1px solid #d4d6dc;background:linear-gradient(#c0c1c6,#9fa0a5);display:flex;margin-top:-1px}
.s{border-right:1px solid #d9dade;display:flex;align-items:center;padding-left:3px}
.s span{letter-spacing:-.35px}
.tog{width:23px;height:22px;background:#a5bda0;border:1px solid #b6ceb4;border-radius:3px;display:flex;align-items:center;justify-content:center;margin-left:3px}
.cb{margin:0 3px 0 5px}.colon{margin-right:-1px}
.cg{--c1:#e2f2b0;--c2:#6a9e20;--c3:#4a6e18}.cb{--c1:#4aa0c0;--c2:#1c6a8c;--c3:#1c4a60}.cm{--c1:#4aa8c8;--c2:#8fc83a;--c3:#1c5a70}
.t1{margin-left:8px}.t2{margin-left:9px}.u1{margin-left:9px}.u2{margin-left:7px}.a{margin-left:9px}.a~.a{margin-left:6px}
.unit{border:0;color:#444;padding-left:4px}

.taskbar{height:39px;display:flex;align-items:center;background:linear-gradient(#6f93bd 0,#6f93bd 1px,transparent 1px),linear-gradient(100deg,#12355f 0,#143f73 4%,#124a8a 8%,#134f92 27%,#1a5a9f 32%,#15569c 48%,#1466bc 62%,#2474c6 68%,#1166bb 76%,#125cae 88%,#0f3f78 91%,#0c3566 97%,#1a4472);border-top:1px solid #0c2038}
.orb{margin-left:8px}
.wmp{margin:0 20px 0 28px}
.tb{width:59px;height:38px;border:1px solid #9db9d8;border-radius:3px;box-shadow:0 0 0 1px #0c2440;background:linear-gradient(135deg,#6a92bf 0,#2c5f9c 50%,#2e67a8);margin-right:3px;display:flex;align-items:center;justify-content:center}
.cur{background:linear-gradient(150deg,#c3d3e6 0,#87a6cb 45%,#a9c0dc)}
.tray{margin-left:auto;display:flex;align-items:center;gap:9px;height:38px}
.clock{font:11.5px/17px "Open Sans","Noto Sans",sans-serif;color:#fff;text-align:center;letter-spacing:-.15px;width:62px;margin-left:6px}
.desk{width:15px;height:38px;margin-left:-5px;border:1px solid #6e92ba;background:linear-gradient(150deg,#56799f,#244a78 50%)}

.dialog{position:absolute;left:490px;top:270px;width:433px;height:622px;border:1px solid #4c525c;border-radius:7px 7px 6px 6px;background:linear-gradient(115deg,#f4f8fd 0,#eaf1fa 18%,#e0eaf6 19%,#edf4fc 26%,#dbe6f2 34%,#e9f2fc 48%);box-shadow:inset 0 0 0 1px #fff,1px 2px 5px #0005;padding:0 6px 6px}
.dtitle{height:28px;display:flex;align-items:center}
.dtitle span{font:12px/20px "Open Sans","Noto Sans",sans-serif;letter-spacing:-.2px;color:#000;margin-left:5px}
.dx{margin:0 0 0 auto;align-self:flex-start;width:47px;height:19px;border:1px solid #8c94a0;border-top:0;border-radius:0 0 4px 4px;display:flex;align-items:center;justify-content:center}
.dbody{height:586px;background:#f0f0f0;border:1px solid #6c727c;padding:11px 11px 0 11px;display:flex;flex-direction:column}
.dtabs{display:flex;align-items:flex-end;height:21px;margin-bottom:-1px;position:relative;z-index:1}
.dtabs span{height:19px;line-height:19px;text-align:center;border:1px solid #888b92;border-left:0;background:linear-gradient(#f2f2f2,#e6e6e6 50%,#d3d3d3 52%,#cfcfcf)}
.dtabs span.on{height:21px;line-height:22px;background:#fff;border-left:1px solid #888b92;border-bottom:0;padding-right:3px}
.pane{width:393px;height:512px;background:#fff;border:1px solid #888b92;padding:4px 7px 0;display:flex;flex-direction:column}
.radios{height:59px;border:1px solid #d5dfe8;border-radius:4px;padding:12px 0 0 9px}
.radios label{display:flex;align-items:center;gap:6px;height:13px;margin-bottom:10px}
.rad{width:12px;height:12px;border-radius:50%;border:1px solid #8e8f8f;background:radial-gradient(#e8e8e8 40%,#c8c8c8);box-shadow:inset 0 0 0 1px #f4f4f4}
.rad.on{background:radial-gradient(circle at 45% 40%,#6cc8f0 0,#125a8c 35%,#0c3050 50%,#e8e8e8 55%)}
.fgrid{display:grid;grid-template-columns:186px 185px;column-gap:6px;row-gap:14px;margin-top:14px}
.fs{height:62px;border:1px solid #d5dfe8;border-radius:4px;position:relative;padding:9px 7px 0 6px}
.fs em{position:absolute;left:5px;top:-7px;background:#fff;padding:0 2px}
.fr{display:flex;height:20px;margin-bottom:6px;align-items:center}
.fr u{font:italic 16px/18px "Liberation Serif",serif;width:16px;margin-top:-3px}
.in{flex:1;height:20px;border:1px solid #e2e3ea;border-top-color:#abadb3;background:#fff;padding:4px 3px 0;border-radius:1px;letter-spacing:-.1px}
.ro{background:#efefef;border-color:#afafaf;color:#808080;margin-right:-1px}
.lk{width:18px;height:18px;border:1px solid #777;border-radius:3px;background:#eee;margin-left:1px;display:flex;align-items:center;justify-content:center}
.lower{display:flex;margin-top:9px;height:113px}
.cuts{width:184px;margin:0 7px 0 1px;display:flex;flex-direction:column;gap:9px}
.pb{height:21px;line-height:19px;text-align:center;border:1px solid #707070;border-radius:3px;background:linear-gradient(#f2f2f2 0,#ebebeb 48%,#dddddd 52%,#cfcfcf);box-shadow:inset 0 0 0 1px #fcfcfc;color:#000;padding-right:2px}
.cuts .pb{letter-spacing:-.35px}
.cuts .pb:last-child{margin-top:1px}
.diag{margin-top:-4px;letter-spacing:-.2px}
.diag svg{font:12px "DejaVu Sans Condensed",sans-serif;margin-bottom:7px}
.diag .gk{font:italic 16px "Liberation Serif",serif}
.label{display:flex;align-items:center;margin-top:auto;margin-bottom:8px}
.label span:first-child{width:31px;margin-left:-1px}
.acts{display:flex;gap:8px;padding:9px 0 0 80px}
.acts .pb{width:73px}
.acts .def{border:2px solid #3cc0ee;line-height:17px;background:linear-gradient(#eaf6fb 0,#dcf0f8 48%,#c0dde8 52%,#cfe4ec);box-shadow:0 0 0 1px #3c7fb160 inset}
```
FILE: sphere.js
```
// Far-field request points drawn over the translucent meshed sphere.
const cv = document.getElementById('sphere');
const g = cv.getContext('2d');
const CX = 304.8, CY = 302.8, R = 283;
const EL = 18 * Math.PI / 180, AZ = 5.5 * Math.PI / 180;
const se = Math.sin(EL), ce = Math.cos(EL), sa = Math.sin(AZ), ca = Math.cos(AZ);

function project(x, y, z) {
  return [
    CX + R * (-ca * x + sa * y),
    CY - R * (se * sa * x + se * ca * y + ce * z),
    ce * sa * x + ce * ca * y - se * z
  ];
}
function onSphere(lat, lon) {
  const c = Math.cos(lat);
  return project(c * Math.cos(lon), c * Math.sin(lon), Math.sin(lat));
}
function hash(a, b) {
  const s = Math.sin(a * 127.1 + b * 311.7) * 43758.5453;
  return s - Math.floor(s);
}
function mix(a, b, t) { return a.map((v, i) => Math.round(v + (b[i] - v) * t)); }
function light(px, py) {
  const nx = (px - CX) / R, ny = (py - CY) / R;
  const d = Math.hypot(nx - 0.08, (ny + 0.2) * 0.9);
  let t = 1.04 - 0.72 * Math.pow(d, 1.05);
  if (nx < 0) t += nx * 0.2;
  return Math.max(0, Math.min(1, t));
}
function line(x0, y0, x1, y1, color) {
  x0 = Math.round(x0); y0 = Math.round(y0);
  const n = Math.max(Math.abs(x1 - x0), Math.abs(y1 - y0));
  g.fillStyle = color;
  for (let i = 0; i <= n; i++) {
    g.fillRect(Math.round(x0 + (x1 - x0) * i / (n || 1)), Math.round(y0 + (y1 - y0) * i / (n || 1)), 1, 1);
  }
}

// Body: irregular two-tone facets
g.save();
g.beginPath(); g.arc(CX, CY, R, 0, 7); g.clip();
g.fillStyle = '#3a6420'; g.fillRect(0, 0, 620, 610);
const D = Math.PI / 180, ST = 5;
// Shared corners, so that neighbouring facets leave no gap.
function corner(i, j) {
  j = (j + 360) % 360;
  const k = Math.abs(i) > 70 ? 0 : 2.4;
  return onSphere((i + (hash(i, j + 7) - 0.5) * k) * D, (j + (hash(j + 3, i) - 0.5) * k) * D);
}
for (let i = -90; i < 90; i += ST) {
  for (let j = 0; j < 360; j += ST) {
    const m = onSphere((i + ST / 2) * D, (j + ST / 2) * D);
    if (m[2] < -0.06) continue;
    const n = hash(i / ST, j / ST) * 0.5 + hash(Math.floor(i / 15) + 2, Math.floor(j / 10)) * 0.5;
    const t = light(m[0], m[1]);
    const c = n > 0.49 ? mix([66, 74, 20], [186, 228, 30], t) : mix([34, 78, 30], [112, 212, 42], t);
    g.beginPath();
    [corner(i, j), corner(i, j + ST), corner(i + ST, j + ST), corner(i + ST, j)].forEach((p, k) => k ? g.lineTo(p[0], p[1]) : g.moveTo(p[0], p[1]));
    g.closePath();
    g.fillStyle = g.strokeStyle = 'rgb(' + c + ')';
    g.fill(); g.stroke();
  }
}

// Inner spheres with their triangle mesh
function inner(x, y, r, seed, stops) {
  g.save();
  g.beginPath(); g.arc(x, y, r, 0, 7); g.clip();
  const gr = g.createRadialGradient(x + r * 0.4, y - r * 0.35, r * 0.1, x + r * 0.1, y - r * 0.05, r * 1.1);
  gr.addColorStop(0, stops[0]); gr.addColorStop(0.6, stops[1]); gr.addColorStop(1, stops[2]);
  g.fillStyle = gr; g.fillRect(x - r, y - r, 2 * r, 2 * r);
  g.strokeStyle = 'rgba(205,225,110,.28)'; g.lineWidth = 1;
  const pt = (a, b) => {
    const la = (a * 11 - 90 + hash(a, b + seed) * 5) * D, lo = (b * 11 + (a % 2) * 5.5 + hash(b, a + seed) * 5) * D;
    return [x + r * Math.cos(la) * Math.sin(lo), y + r * Math.sin(la)];
  };
  g.beginPath();
  for (let a = 0; a < 17; a++) for (let b = -8; b < 8; b++) {
    const p = pt(a, b), q = pt(a, b + 1), s = pt(a + 1, b);
    g.moveTo(...q); g.lineTo(...p); g.lineTo(...s); g.lineTo(...q);
  }
  g.stroke();
  g.strokeStyle = 'rgba(50,80,15,.35)'; g.lineWidth = 4; g.setLineDash([3, 2]);
  g.beginPath(); g.arc(x, y, r - 2, -0.5, 3.3); g.stroke();
  g.strokeStyle = 'rgba(150,190,90,.6)'; g.lineWidth = 1.5;
  g.beginPath(); g.arc(x, y, r - 1, 3.1, 6.3); g.stroke();
  g.restore();
}
inner(200.4, 299, 103.5, 4, ['rgba(190,175,15,.38)', 'rgba(140,120,0,.42)', 'rgba(50,60,0,.5)']);
inner(409, 305.5, 105, 9, ['rgba(225,220,10,.42)', 'rgba(180,170,0,.38)', 'rgba(70,100,10,.45)']);
g.restore();

g.strokeStyle = '#2d4f1c'; g.lineWidth = 2;
g.beginPath(); g.arc(CX, CY, R, 0, 7); g.stroke();

// Request points, 4 degree spacing in both directions
const arms = [[1, 1], [1, -1], [-1, 1], [-1, -1]];
for (let pass = 0; pass < 2; pass++) {
  for (let la = -88; la <= 88; la += 4) {
    for (let lo = 0; lo < 360; lo += 4) {
      const p = onSphere(la * D, lo * D);
      const dx = p[0] - CX, dy = p[1] - CY, rr = Math.hypot(dx, dy) / R;
      if ((pass === 0) !== (p[2] < 0)) continue;
      for (const [ax, ay] of arms) {
        const out = (ax * dx + ay * dy) / R;
        if (pass === 0) {
          if (rr > 0.975 && out > 0) line(p[0], p[1], p[0] + ax * 7, p[1] + ay * 7, '#00ffff');
          else if (rr < 0.93) line(p[0], p[1], p[0] + ax * 5, p[1] + ay * 5, 'rgba(40,170,90,.25)');
        } else if (out > 0.02) {
          line(p[0], p[1], p[0] + ax * 7, p[1] + ay * 7, '#00ffff');
        } else {
          line(p[0], p[1], p[0] + ax * 6, p[1] + ay * 6, 'rgba(60,210,110,.35)');
        }
      }
    }
  }
}

// Yellow cut outline
g.strokeStyle = '#ffff00'; g.lineWidth = 1.5;
g.beginPath();
g.moveTo(36, 208); g.bezierCurveTo(16, 270, 18, 350, 56, 420);
g.bezierCurveTo(96, 500, 190, 562, 290, 567);
g.bezierCurveTo(400, 572, 490, 520, 545, 440); g.bezierCurveTo(568, 405, 580, 360, 586, 322);
g.stroke();

// Axes
for (let i = 0; i < 185; i += 11) line(304, 302 - i, 304, Math.max(117, 302 - i - 8), '#c81400');
for (let i = 0; i < 193; i += 11) line(304 - i, 302 - i * 0.033, 304 - Math.min(193, i + 8), 302 - (i + 8) * 0.033, '#0000e8');
for (let i = 0; i < 67; i += 8) line(305 + i * 0.28, 302 - i, 305 + (i + 5) * 0.28, 302 - i - 5, '#10f010');
```
